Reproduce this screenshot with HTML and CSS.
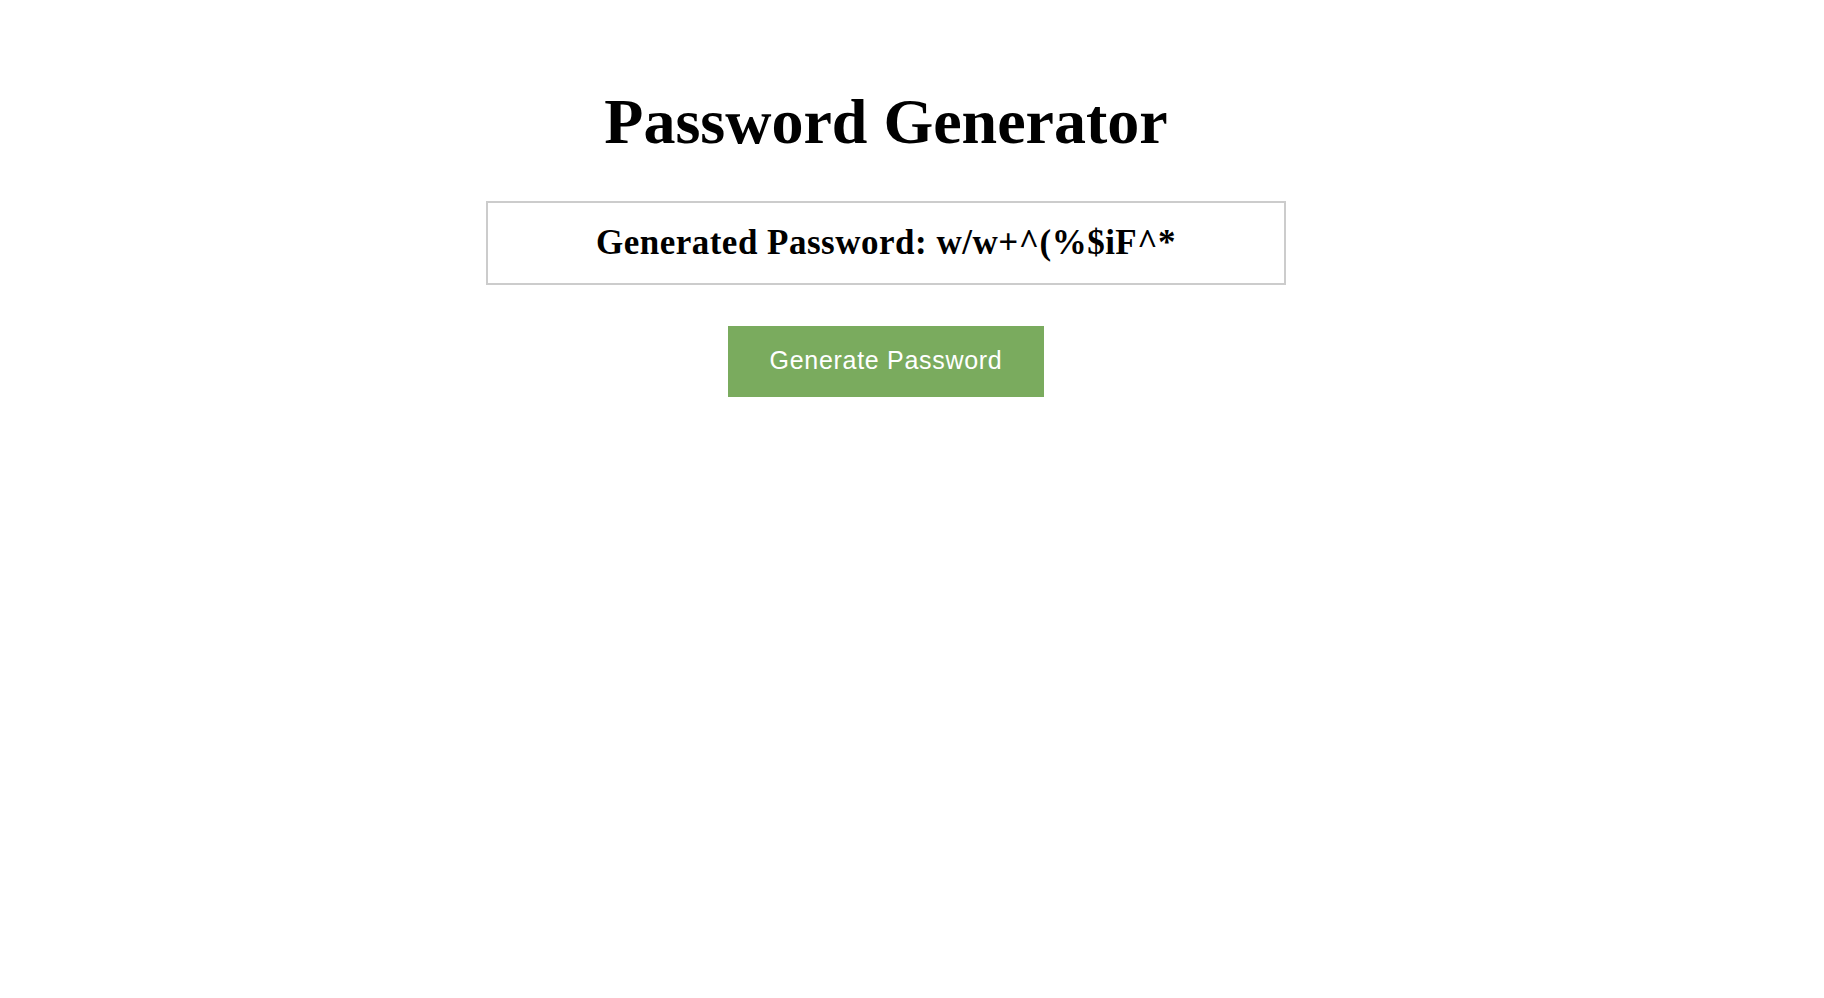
FILE: index.html
```html
<!DOCTYPE html>
<html lang="en">
<head>
<meta charset="utf-8">
<title>Password Generator</title>
<link rel="stylesheet" href="styles.css">
</head>
<body>
<main class="page">
  <h1 class="title">Password Generator</h1>
  <div class="result">
    <h2 class="result-text">Generated Password: w/w+^(%$iF^*</h2>
  </div>
  <button class="generate-btn" type="button">Generate Password</button>
</main>
</body>
</html>
```

FILE: styles.css
```css
html, body {
  margin: 0;
  padding: 0;
  background: #ffffff;
}

body {
  font-family: "Liberation Serif", "Times New Roman", serif;
  color: #000000;
}

.page {
  display: flex;
  flex-direction: column;
  align-items: center;
  padding: 86px 52px 0 0;
}

.title {
  margin: 0;
  font-size: 64px;
  line-height: 72px;
  font-weight: bold;
}

.result {
  box-sizing: border-box;
  width: 800px;
  margin-top: 43px;
  border: 2px solid #cccccc;
  padding: 20px 0 20px;
  text-align: center;
}

.result-text {
  margin: 0;
  font-size: 35px;
  line-height: 40px;
  letter-spacing: 0.5px;
  font-weight: bold;
}

.generate-btn {
  margin-top: 41px;
  border: none;
  border-radius: 0;
  background: #7aab5e;
  color: #ffffff;
  font-family: "Liberation Sans", Arial, Helvetica, sans-serif;
  font-size: 25px;
  line-height: 28px;
  letter-spacing: 0.7px;
  padding: 20px 42px 23px;
  cursor: pointer;
}
```
